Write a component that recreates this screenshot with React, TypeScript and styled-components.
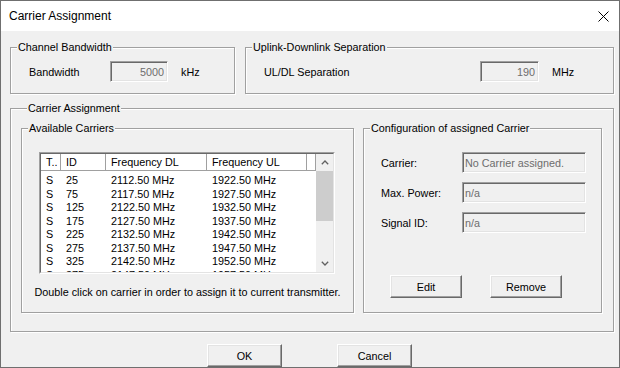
import React from "react";
import styled, { createGlobalStyle } from "styled-components";

const GlobalStyle = createGlobalStyle`
  html, body {
    margin: 0;
    padding: 0;
    background: #ffffff;
  }
  body {
    font-family: "Liberation Sans", Arial, sans-serif;
    font-size: 10.8px;
    color: #000;
  }
  * {
    box-sizing: border-box;
  }
`;

const Window = styled.div`
  width: 620px;
  height: 368px;
  border: 1px solid #6f6f6f;
  background: #f0f0f0;
  display: flex;
  flex-direction: column;
  overflow: hidden;
`;

const TitleBar = styled.div`
  height: 30px;
  flex-shrink: 0;
  background: #ffffff;
  display: flex;
  align-items: center;
  justify-content: space-between;
  padding: 0 10px 0 8px;
  font-size: 12px;
`;

const Body = styled.div`
  flex: 1;
  padding: 16px 5px 0 9px;
  display: flex;
  flex-direction: column;
`;

const TopRow = styled.div`
  display: flex;
  gap: 10px;
`;

// etched group box like the classic win32 one
const Group = styled.div<{ $w?: number; $h: number }>`
  ${(p) => (p.$w ? `width: ${p.$w}px;` : "flex: 1;")}
  height: ${(p) => p.$h}px;
  flex-shrink: 0;
  border: 1px solid #a0a0a0;
  box-shadow: inset 1px 1px 0 #ffffff, 1px 1px 0 #ffffff;
  display: flex;
  flex-direction: column;
`;

const Caption = styled.div`
  align-self: flex-start;
  margin: -7px 0 0 6px;
  padding: 0 1px;
  line-height: 13px;
  background: #f0f0f0;
`;

const ValueRow = styled.div`
  display: flex;
  align-items: center;
  margin-top: 7px;
  padding-left: 18px;
`;

const Label = styled.span<{ $w: number }>`
  width: ${(p) => p.$w}px;
  flex-shrink: 0;
`;

const Field = styled.input<{ $w: number; $right?: boolean }>`
  width: ${(p) => p.$w}px;
  height: 21px;
  margin: 0;
  padding: 0 3px 0 2px;
  font: inherit;
  color: #6d6d6d;
  background: #f0f0f0;
  text-align: ${(p) => (p.$right ? "right" : "left")};
  border: 1px solid;
  border-color: #a0a0a0 #ffffff #ffffff #a0a0a0;
  box-shadow: inset 1px 1px 0 #696969, inset -1px -1px 0 #e3e3e3;
  outline: none;
`;

const Unit = styled.span`
  margin-left: 13px;
`;

const CarrierGroup = styled(Group)`
  margin-top: 14px;
  padding: 0 10px;
`;

const InnerRow = styled.div`
  display: flex;
  gap: 9px;
  margin-top: 13px;
`;

const ListFrame = styled.div`
  width: 296px;
  height: 122px;
  margin: 17px 0 0 17px;
  border: 1px solid;
  border-color: #a0a0a0 #ffffff #ffffff #a0a0a0;
  display: flex;
`;

const ListInner = styled.div`
  flex: 1;
  display: flex;
  background: #ffffff;
  border: 1px solid;
  border-color: #696969 #e3e3e3 #e3e3e3 #696969;
  overflow: hidden;
`;

const Table = styled.div`
  flex: 1;
  display: flex;
  flex-direction: column;
`;

const HeaderRow = styled.div`
  display: flex;
  height: 17px;
  flex-shrink: 0;
`;

const HeadCell = styled.div<{ $w?: number }>`
  ${(p) => (p.$w ? `width: ${p.$w}px;` : "flex: 1;")}
  flex-shrink: 0;
  padding-left: 5px;
  line-height: 17px;
  white-space: nowrap;
  overflow: hidden;
  border-right: 1px solid #a0a0a0;
  border-bottom: 1px solid #a0a0a0;
  box-shadow: inset 1px 0 0 #ffffff;
`;

const Rows = styled.div`
  padding-top: 3px;
`;

const Row = styled.div`
  display: flex;
  height: 13.5px;
  line-height: 13.5px;
`;

const Cell = styled.div<{ $w: number }>`
  width: ${(p) => p.$w}px;
  flex-shrink: 0;
  padding-left: 5px;
  white-space: nowrap;
`;

const ScrollBar = styled.div`
  width: 17px;
  flex-shrink: 0;
  background: #f0f0f0;
  display: flex;
  flex-direction: column;
`;

const ArrowBtn = styled.div<{ $bottom?: boolean }>`
  height: 17px;
  display: flex;
  align-items: center;
  justify-content: center;
  ${(p) => (p.$bottom ? "margin-top: auto;" : "")}
`;

const Thumb = styled.div`
  height: 50px;
  background: #cdcdcd;
`;

const Hint = styled.div`
  margin-top: 12px;
  text-align: center;
  line-height: 13px;
`;

const ConfigFields = styled.div`
  display: flex;
  flex-direction: column;
  gap: 9px;
  margin-top: 17px;
  padding-left: 17px;
`;

const ConfigRow = styled.div`
  display: flex;
  align-items: center;
`;

const ConfigButtons = styled.div`
  display: flex;
  gap: 28px;
  margin-top: auto;
  margin-bottom: 14px;
  padding-left: 26px;
`;

const Button = styled.button<{ $w: number }>`
  width: ${(p) => p.$w}px;
  height: 23px;
  margin: 0;
  padding: 0;
  font: inherit;
  color: #000;
  background: #f0f0f0;
  border: 1px solid;
  border-color: #ffffff #696969 #696969 #ffffff;
  box-shadow: inset -1px -1px 0 #a0a0a0, inset 1px 1px 0 #e3e3e3;
`;

const DialogButtons = styled.div`
  display: flex;
  gap: 55px;
  margin-top: 12px;
  padding-left: 197px;
`;

const carriers = [25, 75, 125, 175, 225, 275, 325, 375].map((id, i) => ({
  type: "S",
  id,
  dl: (2112.5 + i * 5).toFixed(2) + " MHz",
  ul: (1922.5 + i * 5).toFixed(2) + " MHz",
}));

const cols = [20, 45, 101, 100];

const Chevron = ({ down }: { down?: boolean }) => (
  <svg width="8" height="5" viewBox="0 0 8 5">
    <polyline
      points={down ? "0.8,0.8 4,4 7.2,0.8" : "0.8,4.2 4,1 7.2,4.2"}
      fill="none"
      stroke="#606060"
      strokeWidth="1.3"
    />
  </svg>
);

export default function App() {
  return (
    <>
      <GlobalStyle />
      <Window>
        <TitleBar>
          <span>Carrier Assignment</span>
          <svg width="11" height="11" viewBox="0 0 11 11">
            <path d="M0.5 0.5 L10.5 10.5 M10.5 0.5 L0.5 10.5" stroke="#000" strokeWidth="1" />
          </svg>
        </TitleBar>
        <Body>
          <TopRow>
            <Group $w={225} $h={47}>
              <Caption>Channel Bandwidth</Caption>
              <ValueRow>
                <Label $w={81}>Bandwidth</Label>
                <Field $w={58} $right readOnly value="5000" />
                <Unit>kHz</Unit>
              </ValueRow>
            </Group>
            <Group $h={47}>
              <Caption>Uplink-Downlink Separation</Caption>
              <ValueRow>
                <Label $w={216}>UL/DL Separation</Label>
                <Field $w={59} $right readOnly value="190" />
                <Unit>MHz</Unit>
              </ValueRow>
            </Group>
          </TopRow>

          <CarrierGroup $h={215}>
            <Caption>Carrier Assignment</Caption>
            <InnerRow>
              <Group $w={333} $h={185}>
                <Caption>Available Carriers</Caption>
                <ListFrame>
                  <ListInner>
                    <Table>
                      <HeaderRow>
                        <HeadCell $w={cols[0]}>T..</HeadCell>
                        <HeadCell $w={cols[1]}>ID</HeadCell>
                        <HeadCell $w={cols[2]}>Frequency DL</HeadCell>
                        <HeadCell $w={cols[3]}>Frequency UL</HeadCell>
                        <HeadCell />
                      </HeaderRow>
                      <Rows>
                        {carriers.map((c) => (
                          <Row key={c.id}>
                            <Cell $w={cols[0]}>{c.type}</Cell>
                            <Cell $w={cols[1]}>{c.id}</Cell>
                            <Cell $w={cols[2]}>{c.dl}</Cell>
                            <Cell $w={cols[3]}>{c.ul}</Cell>
                          </Row>
                        ))}
                      </Rows>
                    </Table>
                    <ScrollBar>
                      <ArrowBtn>
                        <Chevron />
                      </ArrowBtn>
                      <Thumb />
                      <ArrowBtn $bottom>
                        <Chevron down />
                      </ArrowBtn>
                    </ScrollBar>
                  </ListInner>
                </ListFrame>
                <Hint>Double click on carrier in order to assign it to current transmitter.</Hint>
              </Group>

              <Group $w={239} $h={185}>
                <Caption>Configuration of assigned Carrier</Caption>
                <ConfigFields>
                  <ConfigRow>
                    <Label $w={81}>Carrier:</Label>
                    <Field $w={124} readOnly value="No Carrier assigned." />
                  </ConfigRow>
                  <ConfigRow>
                    <Label $w={81}>Max. Power:</Label>
                    <Field $w={124} readOnly value="n/a" />
                  </ConfigRow>
                  <ConfigRow>
                    <Label $w={81}>Signal ID:</Label>
                    <Field $w={124} readOnly value="n/a" />
                  </ConfigRow>
                </ConfigFields>
                <ConfigButtons>
                  <Button $w={72}>Edit</Button>
                  <Button $w={72}>Remove</Button>
                </ConfigButtons>
              </Group>
            </InnerRow>
          </CarrierGroup>

          <DialogButtons>
            <Button $w={75}>OK</Button>
            <Button $w={75}>Cancel</Button>
          </DialogButtons>
        </Body>
      </Window>
    </>
  );
}
